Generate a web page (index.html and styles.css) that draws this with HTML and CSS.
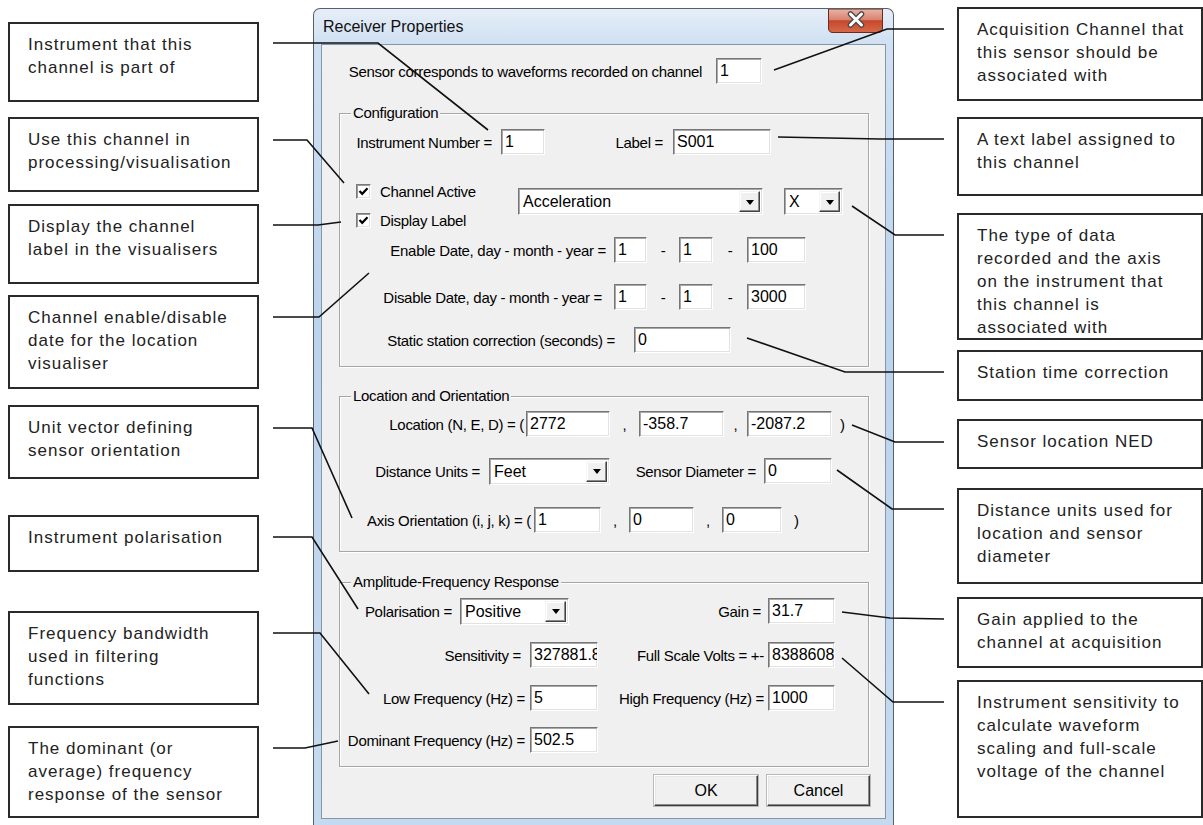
FILE: index.html
```html
<!DOCTYPE html>
<html>
<head>
<meta charset="utf-8">
<title>Receiver Properties</title>
<link rel="stylesheet" href="styles.css">
</head>
<body>
<div class="page">
  <div class="col-left">
    <div class="note n1">Instrument that this<br>channel is part of</div>
    <div class="note n2">Use this channel in<br>processing/visualisation</div>
    <div class="note n3">Display the channel<br>label in the visualisers</div>
    <div class="note n4">Channel enable/disable<br>date for the location<br>visualiser</div>
    <div class="note n5">Unit vector defining<br>sensor orientation</div>
    <div class="note n6">Instrument polarisation</div>
    <div class="note n7">Frequency bandwidth<br>used in filtering<br>functions</div>
    <div class="note n8">The dominant (or<br>average) frequency<br>response of the sensor</div>
  </div>

  <div class="window">
    <div class="titlebar">
      <span class="title">Receiver Properties</span>
      <span class="close">
        <svg width="55" height="24" viewBox="0 0 55 24">
          <defs>
            <linearGradient id="cg" x1="0" y1="0" x2="0" y2="1">
              <stop offset="0" stop-color="#eab3a5"/>
              <stop offset="0.45" stop-color="#d9836f"/>
              <stop offset="0.5" stop-color="#c5472d"/>
              <stop offset="1" stop-color="#d86a48"/>
            </linearGradient>
          </defs>
          <path d="M0.5 0 H54.5 V19 Q54.5 23.5 50 23.5 H5 Q0.5 23.5 0.5 19 Z" fill="url(#cg)" stroke="#70281c"/>
          <path d="M22.5 5 L33.5 16 M33.5 5 L22.5 16" stroke="#4a4a4a" stroke-width="5.5" stroke-linecap="round"/>
          <path d="M22.5 5 L33.5 16 M33.5 5 L22.5 16" stroke="#ffffff" stroke-width="3" stroke-linecap="round"/>
        </svg>
      </span>
    </div>
    <div class="client">
      <div class="row">
        <span class="lbl w363">Sensor corresponds to waveforms recorded on channel</span>
        <span class="tb ml14 w46">1</span>
      </div>

      <div class="group g-config">
        <div class="legend">Configuration</div>
        <div class="row mt7">
          <span class="lbl w152">Instrument Number =</span>
          <span class="tb ml9 w44">1</span>
          <span class="lbl w118">Label =</span>
          <span class="tb ml10 w98">S001</span>
        </div>
        <div class="row-checks">
          <div class="checks">
            <div class="chk"><span class="box"><svg width="11" height="11" viewBox="0 0 11 11"><path d="M1.5 5 L4.2 7.8 L9.5 2.2" stroke="#000" stroke-width="2.2" fill="none"/></svg></span>Channel Active</div>
            <div class="chk"><span class="box"><svg width="11" height="11" viewBox="0 0 11 11"><path d="M1.5 5 L4.2 7.8 L9.5 2.2" stroke="#000" stroke-width="2.2" fill="none"/></svg></span>Display Label</div>
          </div>
          <div class="combo w245 cmt7"><span class="val">Acceleration</span><span class="drop"><i></i></span></div>
          <div class="combo w59 ml21 cmt7"><span class="val">X</span><span class="drop"><i></i></span></div>
        </div>
        <div class="row mt7">
          <span class="lbl w266">Enable Date, day - month - year =</span>
          <span class="tb ml8 w33">1</span>
          <span class="sep w32">-</span>
          <span class="tb w34">1</span>
          <span class="sep w34">-</span>
          <span class="tb w59">100</span>
        </div>
        <div class="row mt21">
          <span class="lbl w262">Disable Date, day - month - year =</span>
          <span class="tb ml12 w33">1</span>
          <span class="sep w32">-</span>
          <span class="tb w34">1</span>
          <span class="sep w34">-</span>
          <span class="tb w59">3000</span>
        </div>
        <div class="row mt17">
          <span class="lbl w275">Static station correction (seconds) =</span>
          <span class="tb ml19 w97">0</span>
        </div>
      </div>

      <div class="group g-loc">
        <div class="legend">Location and Orientation</div>
        <div class="row mt6">
          <span class="lbl w184">Location (N, E, D) = (</span>
          <span class="tb ml2 w84">2772</span>
          <span class="sep w29">,</span>
          <span class="tb w85">-358.7</span>
          <span class="sep w23">,</span>
          <span class="tb w85">-2087.2</span>
          <span class="sep ml8">)</span>
        </div>
        <div class="row mt21">
          <span class="lbl w140">Distance Units =</span>
          <div class="combo w121 ml9"><span class="val">Feet</span><span class="drop"><i></i></span></div>
          <span class="lbl w146">Sensor Diameter =</span>
          <span class="tb ml8 w68">0</span>
        </div>
        <div class="row mt23">
          <span class="lbl w191">Axis Orientation (i, j, k) = (</span>
          <span class="tb ml3 w67">1</span>
          <span class="sep w28">,</span>
          <span class="tb w65">0</span>
          <span class="sep w28">,</span>
          <span class="tb w60">0</span>
          <span class="sep ml12">)</span>
        </div>
      </div>

      <div class="group g-amp">
        <div class="legend">Amplitude-Frequency Response</div>
        <div class="row mt7">
          <span class="lbl w112">Polarisation =</span>
          <div class="combo w109 ml8"><span class="val">Positive</span><span class="drop"><i></i></span></div>
          <span class="lbl w192">Gain =</span>
          <span class="tb ml7 w67">31.7</span>
        </div>
        <div class="row mt18">
          <span class="lbl w181">Sensitivity =</span>
          <span class="tb ml9 w68">327881.8</span>
          <span class="lbl w166">Full Scale Volts = +-</span>
          <span class="tb ml4 w67">8388608</span>
        </div>
        <div class="row mt17">
          <span class="lbl w185">Low Frequency (Hz) =</span>
          <span class="tb ml5 w68">5</span>
          <span class="lbl w166">High Frequency (Hz) =</span>
          <span class="tb ml4 w67">1000</span>
        </div>
        <div class="row mt16">
          <span class="lbl w185">Dominant Frequency (Hz) =</span>
          <span class="tb ml5 w68">502.5</span>
        </div>
      </div>

      <div class="buttons">
        <span class="btn w104">OK</span>
        <span class="btn w103">Cancel</span>
      </div>
    </div>
  </div>

  <div class="col-right">
    <div class="note r1">Acquisition Channel that<br>this sensor should be<br>associated with</div>
    <div class="note r2">A text label assigned to<br>this channel</div>
    <div class="note r3">The type of data<br>recorded and the axis<br>on the instrument that<br>this channel is<br>associated with</div>
    <div class="note r4">Station time correction</div>
    <div class="note r5">Sensor location NED</div>
    <div class="note r6">Distance units used for<br>location and sensor<br>diameter</div>
    <div class="note r7">Gain applied to the<br>channel at acquisition</div>
    <div class="note r8">Instrument sensitivity to<br>calculate waveform<br>scaling and full-scale<br>voltage of the channel</div>
  </div>

  <svg class="leaders" width="1203" height="825" viewBox="0 0 1203 825">
    <g fill="none" stroke="#111" stroke-width="1.6">
      <polyline points="273,43 378,43 488,130"/>
      <polyline points="273,140 307,140 344,183"/>
      <polyline points="273,225 318,225 341,222"/>
      <polyline points="273,317 319,317 369,273"/>
      <polyline points="273,428 312,428 352,518"/>
      <polyline points="273,537 312,537 358,609"/>
      <polyline points="273,633 320,633 369,694"/>
      <polyline points="273,748 305,748 338,741"/>
      <polyline points="944,29 887,29 774,70"/>
      <polyline points="944,139 880,139 778,137"/>
      <polyline points="944,235 895,235 852,206"/>
      <polyline points="944,372 845,372 747,338"/>
      <polyline points="944,442 895,442 852,425"/>
      <polyline points="944,509 892,509 837,470"/>
      <polyline points="944,619 890,618 842,612"/>
      <polyline points="944,702 893,702 842,658"/>
    </g>
  </svg>
</div>
</body>
</html>
```

FILE: styles.css
```css
* { box-sizing: border-box; }
html, body { margin: 0; padding: 0; }
body {
  width: 1203px;
  height: 825px;
  overflow: hidden;
  background: #ffffff;
  position: relative;
  font-family: "Liberation Sans", Arial, sans-serif;
  color: #000;
}
.page {
  display: flex;
  align-items: flex-start;
  height: 825px;
  padding-left: 8px;
}

/* callout notes */
.col-left { width: 251px; flex: none; display: flex; flex-direction: column; }
.col-right { width: 246px; flex: none; margin-left: 63px; display: flex; flex-direction: column; }
.note {
  flex: none;
  border: 2px solid #2a2a2a;
  background: #fff;
  padding: 9px 4px 0 18px;
  font-size: 17px;
  letter-spacing: 1px;
  line-height: 23px;
  color: #222;
  white-space: nowrap;
}
.n1 { margin-top: 22px; height: 80px; }
.n2 { margin-top: 15px; height: 75px; }
.n3 { margin-top: 12px; height: 80px; }
.n4 { margin-top: 11px; height: 94px; }
.n5 { margin-top: 16px; height: 74px; }
.n6 { margin-top: 36px; height: 57px; }
.n7 { margin-top: 39px; height: 94px; }
.n8 { margin-top: 21px; height: 92px; }
.r1 { margin-top: 7px; height: 94px; }
.r2 { margin-top: 16px; height: 79px; }
.r3 { margin-top: 17px; height: 127px; }
.r4 { margin-top: 10px; height: 51px; }
.r5 { margin-top: 18px; height: 50px; }
.r6 { margin-top: 19px; height: 96px; }
.r7 { margin-top: 13px; height: 71px; }
.r8 { margin-top: 12px; height: 138px; }

/* window frame */
.window {
  flex: none;
  width: 581px;
  margin-left: 54px;
  margin-top: 8px;
  border: 1px solid #56606c;
  border-bottom: none;
  border-radius: 7px 7px 0 0;
  padding: 0 7px 8px;
  background: linear-gradient(#e6eef8, #cfe0f2 36px, #bcd3ec 320px, #c6daef);
}
.titlebar { height: 35px; display: flex; align-items: flex-start; }
.title { font-size: 16px; line-height: 18px; margin: 9px 0 0 2px; color: #111; }
.close { margin-left: auto; margin-right: 3px; width: 55px; height: 24px; display: block; }
.close svg { display: block; }

.client {
  height: 775px;
  border: 1px solid #8296ac;
  background: #f0f0f0;
  padding: 13px 16px 0 17px;
}

/* rows and controls */
.row { display: flex; align-items: center; height: 26px; }
.lbl, .sep, .chk, .legend {
  font-size: 15px;
  letter-spacing: -0.3px;
  white-space: nowrap;
}
.lbl { flex: none; text-align: right; }
.sep { flex: none; text-align: center; }
.tb {
  flex: none;
  height: 26px;
  background: #fff;
  border: 1px solid;
  border-color: #767676 #ffffff #ffffff #767676;
  box-shadow: inset 1px 1px 0 #a8a8a8, inset -1px -1px 0 #e2e2e2;
  font-size: 16px;
  line-height: 24px;
  padding-left: 3px;
  overflow: hidden;
  white-space: nowrap;
}

.group {
  border: 1px solid #a6a6a6;
  box-shadow: inset 1px 1px 0 #fff, 1px 1px 0 #fff;
}
.legend {
  display: block;
  width: max-content;
  margin: -10px 0 0 11px;
  padding: 0 2px;
  background: #f0f0f0;
  line-height: 18px;
}
.g-config { margin-top: 29px; padding-bottom: 13px; }
.g-loc { margin-top: 29px; padding-bottom: 18px; }
.g-amp { margin-top: 30px; padding-bottom: 13px; }

.row-checks { display: flex; align-items: flex-start; margin-top: 26px; }
.checks { flex: none; width: 162px; margin-left: 16px; display: flex; flex-direction: column; gap: 9px; }
.chk { display: flex; align-items: center; height: 20px; }
.box {
  flex: none;
  width: 15px;
  height: 15px;
  margin-right: 9px;
  background: #fff;
  border: 1px solid;
  border-color: #7a7a7a #fff #fff #7a7a7a;
  box-shadow: inset 1px 1px 0 #9a9a9a, inset -1px -1px 0 #e0e0e0;
  display: flex;
  align-items: center;
  justify-content: center;
}
.box svg { display: block; }

.combo {
  flex: none;
  display: flex;
  height: 27px;
  background: #fff;
  border: 1px solid;
  border-color: #767676 #ffffff #ffffff #767676;
  box-shadow: inset 1px 1px 0 #a8a8a8, inset -1px -1px 0 #e2e2e2;
  padding: 2px 2px 2px 2px;
}
.combo .val { flex: 1; font-size: 16px; line-height: 21px; padding-left: 2px; white-space: nowrap; overflow: hidden; }
.combo .drop {
  flex: none;
  width: 21px;
  background: #f0f0f0;
  border: 1px solid;
  border-color: #f4f4f4 #404040 #404040 #f4f4f4;
  box-shadow: inset -1px -1px 0 #8a8a8a, inset 1px 1px 0 #fff;
  display: flex;
  align-items: center;
  justify-content: center;
}
.combo .drop i {
  display: block;
  width: 0;
  height: 0;
  border-left: 4.5px solid transparent;
  border-right: 4.5px solid transparent;
  border-top: 5px solid #000;
  margin-top: 1px;
}
.cmt7 { margin-top: 7px; }

.buttons { display: flex; justify-content: flex-end; gap: 9px; margin-top: 8px; margin-right: -1px; }
.btn {
  flex: none;
  height: 31px;
  background: #f0f0f0;
  border: 1px solid;
  border-color: #ffffff #3c3c3c #3c3c3c #ffffff;
  box-shadow: inset -1px -1px 0 #8a8a8a, inset 1px 1px 0 #e6e6e6, 0 0 0 1px #b9b9b9;
  font-size: 16px;
  display: flex;
  align-items: center;
  justify-content: center;
}

/* spacing utilities */
.mt6 { margin-top: 6px; }
.mt7 { margin-top: 7px; }
.mt16 { margin-top: 16px; }
.mt17 { margin-top: 17px; }
.mt18 { margin-top: 18px; }
.mt21 { margin-top: 21px; }
.mt23 { margin-top: 23px; }
.ml2 { margin-left: 2px; }
.ml3 { margin-left: 3px; }
.ml4 { margin-left: 4px; }
.ml5 { margin-left: 5px; }
.ml7 { margin-left: 7px; }
.ml8 { margin-left: 8px; }
.ml9 { margin-left: 9px; }
.ml10 { margin-left: 10px; }
.ml12 { margin-left: 12px; }
.ml14 { margin-left: 14px; }
.ml19 { margin-left: 19px; }
.ml21 { margin-left: 21px; }

.w23 { width: 23px; } .w28 { width: 28px; } .w29 { width: 29px; }
.w32 { width: 32px; } .w33 { width: 33px; } .w34 { width: 34px; }
.w44 { width: 44px; } .w46 { width: 46px; } .w59 { width: 59px; }
.w60 { width: 60px; } .w65 { width: 65px; } .w67 { width: 67px; }
.w68 { width: 68px; } .w84 { width: 84px; } .w85 { width: 85px; }
.w97 { width: 97px; } .w98 { width: 98px; } .w103 { width: 103px; }
.w104 { width: 104px; } .w109 { width: 109px; } .w112 { width: 112px; }
.w118 { width: 118px; } .w121 { width: 121px; } .w140 { width: 140px; }
.w146 { width: 146px; } .w152 { width: 152px; } .w166 { width: 166px; }
.w181 { width: 181px; } .w184 { width: 184px; } .w185 { width: 185px; }
.w191 { width: 191px; } .w192 { width: 192px; } .w245 { width: 245px; }
.w262 { width: 262px; } .w266 { width: 266px; } .w275 { width: 275px; }
.w363 { width: 363px; }

.leaders { position: absolute; left: 0; top: 0; pointer-events: none; }
```
